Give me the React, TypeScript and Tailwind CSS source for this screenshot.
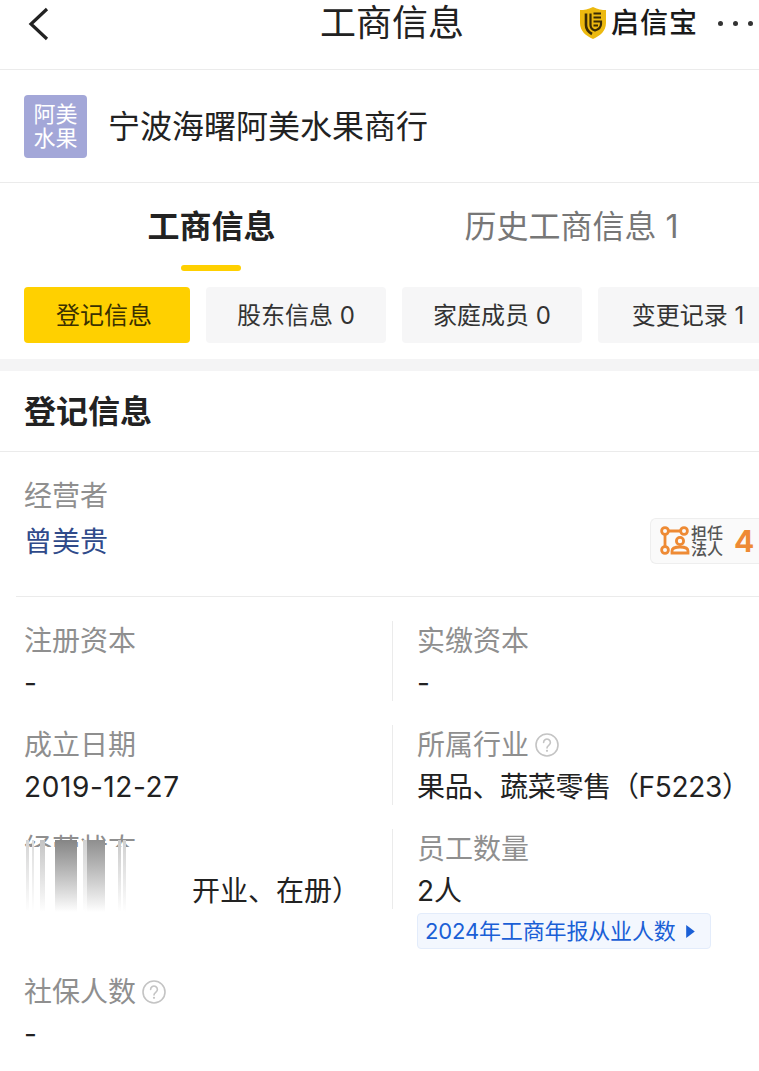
const font = { fontFamily: 'Inter, "Noto Sans CJK SC", "Noto Sans", sans-serif' };

function HelpIcon() {
  return (
    <svg width="26" height="26" viewBox="0 0 26 26" fill="none" className="ml-[5px] shrink-0">
      <circle cx="13" cy="13" r="11" stroke="#c4c4c4" strokeWidth="1.6" />
      <path d="M9.6 10.4a3.4 3.4 0 1 1 5.2 2.9c-1.2.8-1.8 1.3-1.8 2.7" stroke="#c4c4c4" strokeWidth="1.6" strokeLinecap="round" />
      <circle cx="13" cy="18.8" r="1.1" fill="#c4c4c4" />
    </svg>
  );
}

function ShieldLogo() {
  return (
    <svg width="28" height="34" viewBox="0 0 28 34">
      <path d="M14 1 C19 3.5 23 4 27 4 V17 C27 25 21 30 14 33 C7 30 1 25 1 17 V4 C5 4 9 3.5 14 1Z" fill="#ecb90f" />
      <path d="M7 7.5 V19 C7 23 9.5 26 13 28" stroke="#3a2c05" strokeWidth="2.6" fill="none" />
      <path d="M11.5 7.5 V19 C11.5 21.5 13 23.5 16 24.5 C19 23.5 22 21.5 22 18 V15.5 H14.5 M14.5 7.5 H22 M14.5 11.5 H22 M14.5 19.5 H19" stroke="#3a2c05" strokeWidth="2.2" fill="none" />
    </svg>
  );
}

function LegalIcon() {
  return (
    <svg width="30" height="30" viewBox="0 0 30 30" fill="none" stroke="#ee8a34" strokeWidth="2.8">
      <circle cx="5" cy="5" r="3.4" />
      <circle cx="24" cy="5" r="3.4" />
      <circle cx="5" cy="24" r="3.4" />
      <path d="M8.5 5 H20.5 M5 8.5 V20.5" />
      <circle cx="20" cy="15" r="3.6" />
      <path d="M12 27 V25 C12 22 15 21 20 21 C25 21 28 22 28 25 V27 Z" />
    </svg>
  );
}

function Field({ label, value, help, valueClass }: { label: string; value: string; help?: boolean; valueClass?: string }) {
  return (
    <>
      <div className="flex items-center h-10 text-[28px] leading-10 text-[#8f8f8f]">
        {label}
        {help && <HelpIcon />}
      </div>
      <div className={`mt-[3px] h-[37px] text-[28px] leading-[38px] text-[#222222] whitespace-nowrap ${valueClass ?? ''}`}>{value}</div>
    </>
  );
}

const smear = [
  { cls: 'w-[3px] ml-[2px] from-[#d4d4d4]' },
  { cls: 'w-[2px] ml-[3px] from-[#dcdcdc]' },
  { cls: 'w-[5px] ml-[6px] from-[#c4c4c4]' },
  { cls: 'w-[22px] ml-[10px] from-[#858585]' },
  { cls: 'w-[4px] ml-[6px] from-[#d2d2d2]' },
  { cls: 'w-[18px] from-[#8f8f8f]' },
  { cls: 'w-[3px] ml-[13px] from-[#c8c8c8]' },
  { cls: 'w-[3px] ml-[2px] from-[#d0d0d0]' },
];

export default function App() {
  return (
    <div className="w-[759px] h-[1071px] overflow-hidden bg-white" style={font}>
      <header className="flex h-[70px] items-start border-b border-[#ebebeb] pl-[28px] pr-[6px]">
        <svg width="22" height="34" viewBox="0 0 22 34" fill="none" className="mt-[7px]">
          <path d="M19 2 L3 17 L19 32" stroke="#222222" strokeWidth="3.2" />
        </svg>
        <h1 className="ml-[270px] text-[36px] leading-[46px] text-[#222222] whitespace-nowrap">工商信息</h1>
        <div className="ml-auto flex items-center h-[46px]">
          <ShieldLogo />
          <span className="ml-[4px] text-[28px] leading-[36px] font-medium tracking-[1px] text-[#1a1a1a]">启信宝</span>
          <div className="ml-[20px] flex gap-[10px]">
            <span className="w-[5px] h-[5px] rounded-full bg-[#333333]" />
            <span className="w-[5px] h-[5px] rounded-full bg-[#333333]" />
            <span className="w-[5px] h-[5px] rounded-full bg-[#333333]" />
          </div>
        </div>
      </header>

      <section className="flex h-[113px] items-center border-b border-[#ebebeb] pl-6">
        <div className="flex h-[63px] w-[63px] flex-col items-center justify-center rounded-[4px] bg-[#a3a7d8] text-[22px] leading-[24px] text-white">
          <span>阿美</span>
          <span>水果</span>
        </div>
        <div className="ml-[21px] mt-[2px] text-[32px] leading-10 text-[#222222]">宁波海曙阿美水果商行</div>
      </section>

      <nav className="flex h-[89px] pl-[30px]">
        <div className="flex w-[361px] flex-col items-center">
          <div className="mt-[24px] pl-[2px] text-[32px] leading-10 font-bold text-[#222222]">工商信息</div>
          <div className="mt-[18px] h-[6px] w-[60px] rounded-full bg-[#ffd000]" />
        </div>
        <div className="flex w-[361px] flex-col items-center">
          <div className="mt-[24px] text-[32px] leading-10 text-[#777777] whitespace-nowrap">历史工商信息 1</div>
        </div>
      </nav>

      <div className="mt-[15px] flex gap-4 pl-6">
        <div className="flex h-14 w-[166px] shrink-0 items-center justify-center rounded-[4px] bg-[#ffd000] pr-[6px] pt-[1px] text-2xl text-[#3a3000]">登记信息</div>
        <div className="flex h-14 w-[180px] shrink-0 items-center justify-center rounded-[4px] bg-[#f6f6f7] pt-[1px] text-2xl text-[#333333]">股东信息 0</div>
        <div className="flex h-14 w-[180px] shrink-0 items-center justify-center rounded-[4px] bg-[#f6f6f7] pt-[1px] text-2xl text-[#333333]">家庭成员 0</div>
        <div className="flex h-14 w-[180px] shrink-0 items-center justify-center rounded-[4px] bg-[#f6f6f7] pt-[1px] text-2xl text-[#333333] whitespace-nowrap">变更记录 1</div>
      </div>

      <div className="mt-4 h-3 bg-[#f4f4f5]" />

      <div className="flex h-[81px] items-center border-b border-[#ebebeb] pl-6 pt-[1px] text-[32px] font-bold text-[#222222]">登记信息</div>

      <section className="ml-4 h-[145px] border-b border-[#ebebeb] pl-2 pt-[24px]">
        <div className="h-10 text-[28px] leading-10 text-[#8f8f8f]">经营者</div>
        <div className="mt-[6px] flex items-start justify-between">
          <span className="text-[28px] leading-10 text-[#2f4a8a]">曾美贵</span>
          <div className="-mt-[4px] flex h-[46px] w-[109px] items-center rounded-l-[6px] border border-r-0 border-[#eeeeee] bg-[#fafafa] pl-[9px]">
            <LegalIcon />
            <div className="ml-[1px] flex flex-col text-[16px] leading-[16px] font-medium text-[#555555]">
              <span>担任</span>
              <span>法人</span>
            </div>
            <span className="ml-[11px] text-[30px] leading-none font-bold text-[#ee8a34]">4</span>
          </div>
        </div>
      </section>

      <section className="mt-[24px] flex flex-col gap-6">
        <div className="flex">
          <div className="w-[392px] pl-6"><Field label="注册资本" value="-" /></div>
          <div className="h-20 border-l border-[#ebebeb] pl-6"><Field label="实缴资本" value="-" /></div>
        </div>
        <div className="flex">
          <div className="w-[392px] pl-6"><Field label="成立日期" value="2019-12-27" valueClass="tracking-[0.6px]" /></div>
          <div className="h-20 border-l border-[#ebebeb] pl-6"><Field label="所属行业" value="果品、蔬菜零售（F5223）" help valueClass="tracking-[-0.3px]" /></div>
        </div>
        <div className="flex">
          <div className="relative w-[392px] pl-6">
            <div className="h-[18px] overflow-hidden text-[28px] leading-10 text-[#8f8f8f]">经营状态</div>
            <div className="mt-[25px] h-[37px] pl-[168px] text-[28px] leading-[38px] text-[#222222] whitespace-nowrap">开业、在册）</div>
            <div className="absolute left-[24px] top-[11px] flex h-[72px]">
              {smear.map((bar, i) => (
                <div key={i} className={`${bar.cls} h-full bg-gradient-to-b to-white`} />
              ))}
            </div>
          </div>
          <div>
            <div className="h-20 border-l border-[#ebebeb] pl-6"><Field label="员工数量" value="2人" /></div>
            <div className="ml-[25px] mt-[4px] flex h-9 w-[294px] items-center rounded-[4px] border border-[#e3ecfb] bg-[#f3f7fe] pl-[7px] text-[22px] tracking-[-0.15px] text-[#1a5fd6] whitespace-nowrap">
              2024年工商年报从业人数
              <svg width="11" height="15" viewBox="0 0 10 14" className="ml-[9px] shrink-0">
                <path d="M1 1 L9 7 L1 13 Z" fill="#1a5fd6" />
              </svg>
            </div>
          </div>
        </div>
      </section>

      <section className="mt-[23px] pl-6">
        <Field label="社保人数" value="-" help />
      </section>
    </div>
  );
}
